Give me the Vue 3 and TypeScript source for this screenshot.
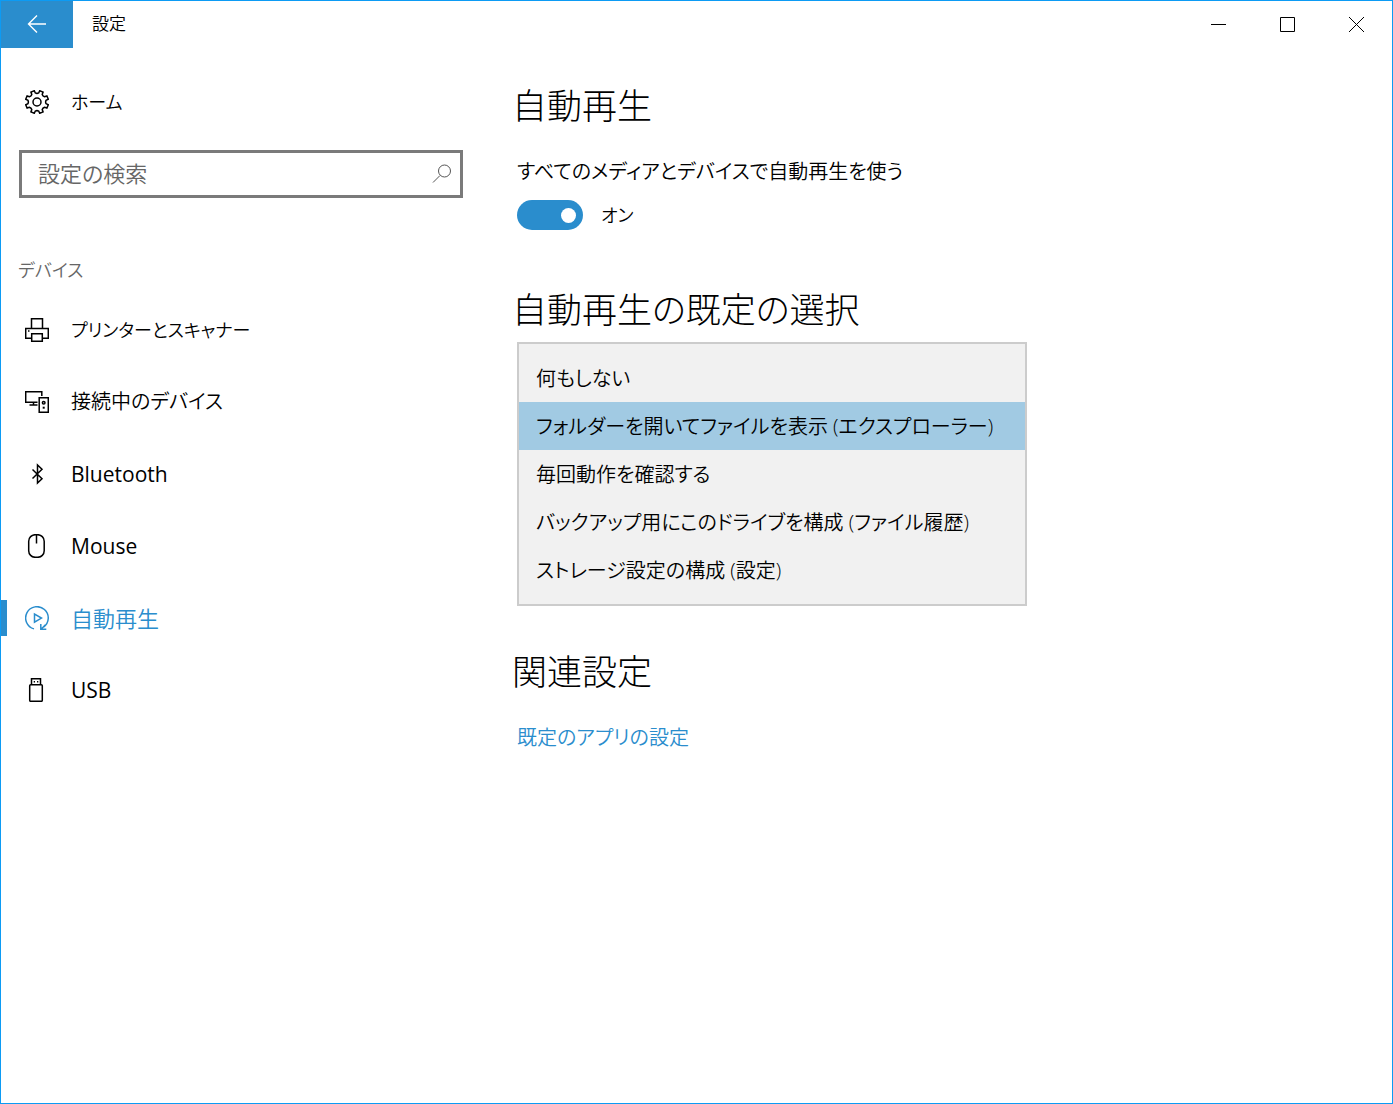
<script setup lang="ts">
import { ref } from 'vue'

interface NavItem {
  id: string
  label: string
  script: 'kana' | 'mixed' | 'kanji' | 'latin'
}

const navItems: NavItem[] = [
  { id: 'printers', label: 'プリンターとスキャナー', script: 'kana' },
  { id: 'connected', label: '接続中のデバイス', script: 'mixed' },
  { id: 'bluetooth', label: 'Bluetooth', script: 'latin' },
  { id: 'mouse', label: 'Mouse', script: 'latin' },
  { id: 'autoplay', label: '自動再生', script: 'kanji' },
  { id: 'usb', label: 'USB', script: 'latin' },
]

const actions: string[] = [
  '何もしない',
  'フォルダーを開いてファイルを表示 (エクスプローラー)',
  '毎回動作を確認する',
  'バックアップ用にこのドライブを構成 (ファイル履歴)',
  'ストレージ設定の構成 (設定)',
]

const active = ref('autoplay')
const query = ref('')
const autoplayOn = ref(true)
const chosen = ref(actions[1])

// Outline of an eight-toothed gear centred on 12,12
function gearPath(): string {
  const point = (radius: number, degrees: number): string => {
    const a = (degrees * Math.PI) / 180
    return `${(12 + radius * Math.cos(a)).toFixed(2)} ${(12 + radius * Math.sin(a)).toFixed(2)}`
  }
  let d = ''
  for (let i = 0; i < 8; i++) {
    const c = i * 45 + 22.5
    d += `${i === 0 ? 'M' : 'L'}${point(9.2, c - 12)} L${point(11.6, c - 9)} L${point(11.6, c + 9)} L${point(9.2, c + 12)} `
    d += `Q${point(8.2, c + 22.5)} ${point(9.2, c + 33)} `
  }
  return d + 'Z'
}
const gear = gearPath()
</script>

<template>
  <div class="window">
    <header class="titlebar">
      <button class="back" type="button" aria-label="戻る">
        <svg width="20" height="20" viewBox="0 0 20 20"><path d="M19 9H1.5M10 .5L1.500 9l8.500 8.500" /></svg>
      </button>
      <span class="title">設定</span>
      <div class="controls">
        <button type="button" aria-label="最小化">
          <svg width="15" height="15" viewBox="0 0 15 15"><path d="M0 7.500h15" /></svg>
        </button>
        <button type="button" aria-label="最大化">
          <svg width="15" height="15" viewBox="0 0 15 15"><path d="M.5.5h14v14H.5z" /></svg>
        </button>
        <button type="button" aria-label="閉じる">
          <svg width="15" height="15" viewBox="0 0 15 15"><path d="M0 0l15 15M15 0L0 15" /></svg>
        </button>
      </div>
    </header>

    <div class="body">
      <aside class="sidebar">
        <a class="row" href="#home">
          <svg class="icon" viewBox="0 0 24 24"><path :d="gear" /><circle cx="12" cy="12" r="4" /></svg>
          <span class="kana">ホーム</span>
        </a>

        <label class="search">
          <input v-model="query" type="text" placeholder="設定の検索" aria-label="設定の検索" />
          <svg width="20" height="20" viewBox="0 0 20 20"><circle cx="12.500" cy="7" r="6" /><path d="M8 11.500L1 18.500" /></svg>
        </label>

        <h2 class="group">デバイス</h2>
        <nav>
          <a
            v-for="item in navItems"
            :key="item.id"
            class="row"
            :class="{ active: item.id === active }"
            :href="'#' + item.id"
            @click.prevent="active = item.id"
          >
            <svg v-if="item.id === 'printers'" class="icon" viewBox="0 0 24 24">
              <path d="M6.500 10V.7h11V10M6 20.300H.7V10.500h22.600v9.800H18" />
              <path d="M6.700 15.700h10.600v7.600H6.700z" />
              <path d="M3 13h1.500" />
            </svg>
            <svg v-else-if="item.id === 'connected'" class="icon" viewBox="0 0 24 24">
              <path d="M12.500 12.300H.7V1.700h16.100V6M8.500 12.500V15M4.500 15h8" />
              <path d="M14.200 7.700h9.100v14.600h-9.100z" />
              <circle cx="18.700" cy="12.800" r="1.300" />
              <path d="M17.700 17.700h2" class="thick" />
            </svg>
            <svg v-else-if="item.id === 'bluetooth'" class="icon" viewBox="0 0 24 24">
              <path d="M7.500 7.500L17 16.700l-4.500 4.300v-18L17 7.300 7.500 16.500" />
            </svg>
            <svg v-else-if="item.id === 'mouse'" class="icon" viewBox="0 0 24 24">
              <rect x="3.700" y=".7" width="15.500" height="22.600" rx="6.500" />
              <path d="M11.500 1v8.500" />
            </svg>
            <svg v-else-if="item.id === 'autoplay'" class="icon" viewBox="0 0 24 24">
              <path d="M9 22.900A11.300 11.300 0 1 1 18.500 21.200" />
              <path d="M20.500 18.800L16 23.300M15.800 18v5.300h5.500" />
              <path d="M9.500 8v8.200l7-4.100z" />
            </svg>
            <svg v-else class="icon" viewBox="0 0 24 24">
              <path d="M6.500 6.500V.7h9v5.800" />
              <rect x="4.700" y="6.700" width="12.600" height="16.600" rx="1" />
              <path d="M8.700 3.700h1.300M12 3.700h1.300" />
            </svg>
            <span :class="item.script">{{ item.label }}</span>
          </a>
        </nav>
      </aside>

      <main class="content">
        <h1>自動再生</h1>
        <label class="caption" for="autoplay">すべてのメディアとデバイスで自動再生を使う</label>
        <div class="toggle">
          <input id="autoplay" v-model="autoplayOn" type="checkbox" role="switch" />
          <span class="kana">{{ autoplayOn ? 'オン' : 'オフ' }}</span>
        </div>

        <h1 id="defaults">自動再生の既定の選択</h1>
        <select v-model="chosen" size="5" aria-labelledby="defaults">
          <option v-for="action in actions" :key="action" :value="action">{{ action }}</option>
        </select>

        <h1 class="related">関連設定</h1>
        <a class="link" href="#default-apps">既定のアプリの設定</a>
      </main>
    </div>
  </div>
</template>

<style>
body {
  margin: 0;
}
</style>

<style scoped>
.window {
  --accent: #2a8dcd;
  box-sizing: border-box;
  min-height: 100vh;
  border: 1px solid #0c9bf4;
  background: #fff;
  color: #000;
  font-family: "Open Sans", "Noto Sans CJK JP", sans-serif;
  font-size: 20px;
  font-weight: 350;
  line-height: 32px;
  font-feature-settings: "palt";
}
svg {
  display: block;
  fill: none;
  stroke: currentColor;
}
button {
  display: flex;
  align-items: center;
  justify-content: center;
  padding: 0;
  border: 0;
  background: none;
  color: inherit;
}
.kana {
  font-size: 18px;
}
.mixed {
  font-size: 20px;
}
.kanji {
  font-size: 22px;
}
.latin {
  font-size: 21px;
  font-weight: 400;
}
.titlebar {
  display: flex;
  height: 47px;
}
.back {
  width: 72px;
  background: var(--accent);
  color: #fff;
  stroke-width: 1.4;
}
.title {
  flex: 1;
  padding-left: 19px;
  font-size: 17px;
  line-height: 46px;
}
.controls {
  display: flex;
  padding-right: 1px;
}
.controls button {
  width: 69px;
}
.body {
  display: flex;
}
.sidebar {
  flex: 0 0 512px;
  padding-top: 18px;
}
.row {
  display: flex;
  align-items: center;
  gap: 22px;
  height: 72px;
  padding-left: 24px;
  color: #000;
  text-decoration: none;
}
.icon {
  width: 24px;
  height: 24px;
  stroke-width: 1.5;
}
.thick {
  stroke-width: 2;
}
.row.active {
  padding-left: 0;
  color: var(--accent);
}
.row.active::before {
  content: "";
  width: 6px;
  height: 36px;
  margin-right: -4px;
  background: var(--accent);
}
.search {
  display: flex;
  align-items: center;
  box-sizing: border-box;
  width: 444px;
  height: 48px;
  margin: 12px 0 0 18px;
  padding: 0 8px 0 16px;
  border: 3px solid #7a7a7a;
  color: #555;
}
.search input {
  flex: 1;
  min-width: 0;
  height: 40px;
  padding: 0 0 2px;
  border: 0;
  outline: 0;
  background: none;
  font: inherit;
  font-size: 22px;
  font-feature-settings: inherit;
}
.search input::placeholder {
  color: #666;
}
.group {
  margin: 56px 0 8px;
  padding-left: 17px;
  color: #666;
  font-size: 18px;
  font-weight: 350;
  line-height: 32px;
}
.content {
  flex: 1;
  display: flex;
  flex-direction: column;
  align-items: flex-start;
  padding: 34px 24px 48px 4px;
}
h1 {
  margin: 0 0 0 -5px;
  font-size: 35px;
  font-weight: 300;
  line-height: 48px;
}
.caption {
  margin-top: 26px;
}
.toggle {
  display: flex;
  align-items: center;
  gap: 18px;
  height: 30px;
  margin: 12px 0 56px;
}
.toggle input {
  appearance: none;
  display: flex;
  align-items: center;
  box-sizing: border-box;
  width: 66px;
  height: 30px;
  margin: 0;
  padding: 0 7px;
  border-radius: 15px;
  background: #999;
}
.toggle input::before {
  content: "";
  width: 15px;
  height: 15px;
  border-radius: 50%;
  background: #fff;
}
.toggle input:checked {
  justify-content: flex-end;
  background: var(--accent);
}
select {
  box-sizing: border-box;
  width: 510px;
  max-width: 100%;
  height: 264px;
  margin: 8px 0 0;
  padding: 10px 0;
  overflow: hidden;
  border: 2px solid #ccc;
  border-radius: 0;
  outline: 0;
  background: #f1f1f1;
  color: #000;
  font: inherit;
  font-feature-settings: inherit;
}
option {
  box-sizing: border-box;
  height: 48px;
  min-height: 48px;
  padding: 9px 17px 0;
  color: #000;
  font-weight: 350;
  font-feature-settings: "palt";
}
option:checked {
  background: linear-gradient(#a1cae3, #a1cae3);
}
.related {
  margin-top: 42px;
}
.link {
  margin-top: 26px;
  color: var(--accent);
  text-decoration: none;
}
</style>
